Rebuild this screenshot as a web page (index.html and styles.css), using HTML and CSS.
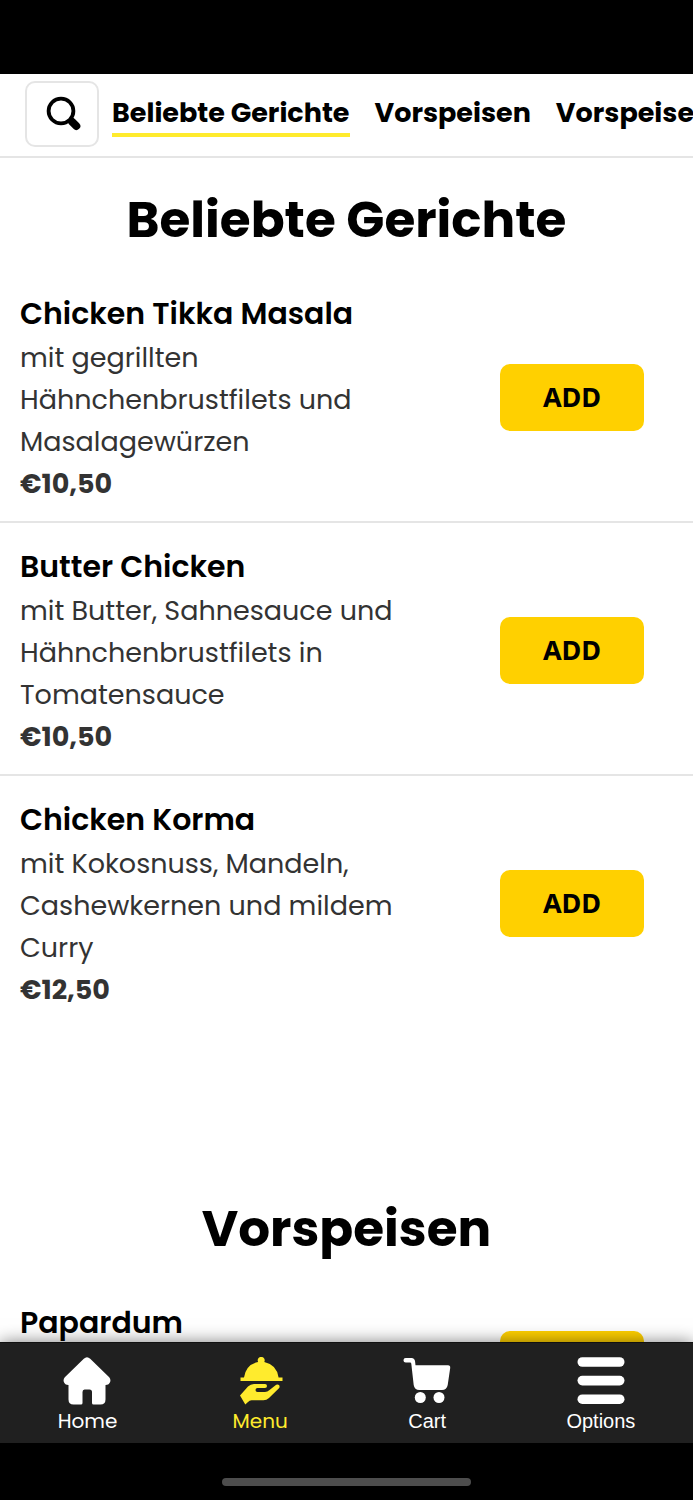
FILE: index.html
```html
<!DOCTYPE html>
<html lang="de">
<head>
  <meta charset="UTF-8" />
  <meta name="viewport" content="width=device-width, initial-scale=1.0"/>
  <title>Beliebte Gerichte</title>
  <link rel="stylesheet" href="styles.css">
</head>
<body>
  <div class="app">
    <div class="status-bar"></div>

    <header class="top-bar">
      <button class="search-btn" aria-label="Suche">
        <svg width="36" height="36" viewBox="0 0 36 36">
          <circle cx="15" cy="15" r="12.4" fill="none" stroke="#000" stroke-width="3.8"/>
          <path d="M24 23.5 L26 25.5" stroke="#000" stroke-width="4"/>
          <path d="M26.3 26 L30.3 30" stroke="#000" stroke-width="8" stroke-linecap="round"/>
        </svg>
      </button>
      <nav class="tabs">
        <a class="tab active" href="#beliebt">Beliebte Gerichte</a>
        <a class="tab" href="#vorspeisen">Vorspeisen</a>
        <a class="tab" href="#vorspeisen">Vorspeisen</a>
      </nav>
    </header>

    <main class="menu">
      <section class="section" id="beliebt">
        <h2>Beliebte Gerichte</h2>
        <article class="dish">
          <div class="dish-info">
            <h3>Chicken Tikka Masala</h3>
            <p>mit gegrillten Hähnchenbrustfilets und Masalagewürzen</p>
            <div class="price">€10,50</div>
          </div>
          <button class="add-btn">ADD</button>
        </article>
        <article class="dish">
          <div class="dish-info">
            <h3>Butter Chicken</h3>
            <p>mit Butter, Sahnesauce und Hähnchenbrustfilets in Tomatensauce</p>
            <div class="price">€10,50</div>
          </div>
          <button class="add-btn">ADD</button>
        </article>
        <article class="dish">
          <div class="dish-info">
            <h3>Chicken Korma</h3>
            <p>mit Kokosnuss, Mandeln, Cashewkernen und mildem Curry</p>
            <div class="price">€12,50</div>
          </div>
          <button class="add-btn">ADD</button>
        </article>
      </section>

      <section class="section" id="vorspeisen">
        <h2>Vorspeisen</h2>
        <article class="dish short">
          <div class="dish-info">
            <h3>Papardum</h3>
          </div>
          <button class="add-btn">ADD</button>
        </article>
      </section>
    </main>

    <nav class="bottom-nav">
      <a class="nav-item" href="#home">
        <svg width="48" height="48" viewBox="0 0 48 48" fill="currentColor">
          <path d="M20.8 1.8 Q24 -1.2 27.2 1.8 L46.2 20.3 Q47.8 22 47.3 24.5 Q46.2 28 42.5 28 V42.5 Q42.5 47.5 37.5 47.5 H30.5 Q29 47.5 29 46 V35 Q29 32.5 26.5 32.5 H21.5 Q19.5 32.5 19.5 35 V46 Q19.5 47.5 18 47.5 H10.5 Q5.5 47.5 5.5 42.5 V28 Q1.8 28 .7 24.5 Q.2 22 1.8 20.3 Z"/>
        </svg>
        <span>Home</span>
      </a>
      <a class="nav-item active" href="#menu">
        <svg width="48" height="48" viewBox="0 0 48 48" fill="currentColor">
          <path d="M22.1 5 A3.5 3.5 0 1 1 28.3 5 Q40.7 7.6 42.6 20.5 H46.5 V24 H4.5 V20.5 H8 Q10 7.6 22.1 5 Z"/>
          <path d="M4 38.5 L12 29.5 Q14.5 27 18 27 H29 Q31 27 31 29 Q31 31 29 31 H21.5 Q19.5 31 19.5 33 Q19.5 35 21.5 35 H29 Q31.5 35 33.2 33.3 L40.2 27.8 Q42 26.8 43.2 28.3 Q44.2 30 42.7 31.5 L33 41 Q30.5 43.3 27.5 43.3 H15.5 Q13.5 43.3 12 45 L9.3 47.5 Z"/>
        </svg>
        <span>Menu</span>
      </a>
      <a class="nav-item plain" href="#cart">
        <svg width="48" height="48" viewBox="0 0 48 48" fill="currentColor">
          <path d="M2.7 1 H8.5 Q11.7 1 12.1 4.5 L12.5 8.3 H45 Q47.5 8.3 47.2 11 L44.7 28 Q43.7 33 39 33 H16.3 Q11.5 33 10.7 28 L8.3 6.8 Q8.2 5.5 7 5.5 H2.7 A2.2 2.2 0 0 1 2.7 1 Z"/>
          <circle cx="17.3" cy="40.5" r="5.5"/>
          <circle cx="36" cy="40.5" r="5.5"/>
        </svg>
        <span>Cart</span>
      </a>
      <a class="nav-item plain" href="#options">
        <svg width="48" height="48" viewBox="0 0 48 48" fill="currentColor">
          <rect x=".5" y=".2" width="47" height="9.6" rx="4.8"/>
          <rect x=".5" y="18.8" width="47" height="9.6" rx="4.8"/>
          <rect x=".5" y="37.4" width="47" height="9.6" rx="4.8"/>
        </svg>
        <span>Options</span>
      </a>
    </nav>

    <div class="home-bar"><div class="home-indicator"></div></div>
  </div>
</body>
</html>
```
FILE: styles.css
```css
* {
  box-sizing: border-box;
}

body {
  margin: 0;
  font-family: Poppins, Inter, sans-serif;
  background: #fff;
  color: #000;
}

h2, h3, p {
  margin: 0;
}

button {
  font-family: inherit;
  cursor: pointer;
}

a {
  color: inherit;
  text-decoration: none;
}

.app {
  display: flex;
  flex-direction: column;
  height: 100vh;
}

.status-bar {
  flex: none;
  height: 74px;
  background: #000;
}

.top-bar {
  flex: none;
  display: flex;
  gap: 13px;
  padding: 7px 0 9px 25px;
  border-bottom: 2px solid #e5e5e5;
  overflow: hidden;
}

.search-btn {
  flex: none;
  display: flex;
  align-items: center;
  justify-content: center;
  width: 74px;
  height: 66px;
  padding: 0 0 0 4px;
  background: #fff;
  border: 2px solid #e5e5e5;
  border-radius: 10px;
}

.tabs {
  display: flex;
  align-items: flex-start;
  gap: 25px;
  padding-top: 12px;
}

.tab {
  border-bottom: 4px solid transparent;
  font-size: 27px;
  font-weight: 700;
  line-height: 40px;
  white-space: nowrap;
}

.tab.active {
  border-color: #ffeb2d;
}

.menu {
  flex: 1;
  min-height: 0;
  overflow-y: auto;
  scrollbar-width: none;
}

.section {
  padding-top: 23px;
  margin-bottom: 140px;
}

.section h2 {
  margin-bottom: 11px;
  font-size: 50px;
  font-weight: 700;
  line-height: 78px;
  text-align: center;
}

.dish {
  display: flex;
  align-items: center;
  justify-content: space-between;
  padding: 21px 49px 16px 20px;
  border-bottom: 2px solid #e5e5e5;
}

.dish:last-child {
  border-bottom: none;
}

.dish-info {
  width: 62%;
}

.dish h3 {
  font-size: 30px;
  font-weight: 600;
  line-height: 46px;
}

.dish p,
.price {
  color: #333;
  font-size: 27px;
  line-height: 42px;
}

.price {
  font-weight: 700;
}

.dish.short {
  align-items: flex-start;
}

.short .add-btn {
  margin-top: 31px;
}

.add-btn {
  width: 144px;
  height: 67px;
  padding: 0 0 2px;
  margin-bottom: 2px;
  background: #ffd000;
  color: #000;
  border: none;
  border-radius: 10px;
  font-family: "Noto Sans", sans-serif;
  font-size: 27px;
  font-weight: 700;
}

.bottom-nav {
  flex: none;
  display: flex;
  justify-content: space-around;
  padding: 14px 0 5px;
  background: #202020;
  border-top: 1px solid #111;
  color: #fff;
  box-shadow: 0 0 16px rgba(0, 0, 0, 0.5);
  z-index: 1;
}

.nav-item {
  display: flex;
  flex-direction: column;
  align-items: center;
  font-size: 20px;
  line-height: 33px;
}

.nav-item.active {
  color: #ffeb2d;
}

.nav-item.plain {
  font-family: "Liberation Sans", Arial, sans-serif;
}

.home-bar {
  flex: none;
  display: flex;
  justify-content: center;
  padding: 35px 0 14px;
  background: #000;
  z-index: 2;
}

.home-indicator {
  width: 36%;
  height: 8px;
  background: #4d4d4d;
  border-radius: 4px;
}
```
